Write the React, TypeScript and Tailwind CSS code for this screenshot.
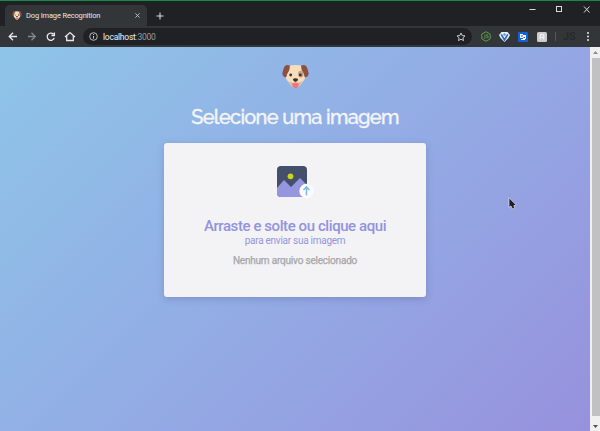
import React from 'react';

function DogIcon({ className }: { className: string }) {
  return (
    <svg className={className} viewBox="0 0 28 26">
      <path d="M6 2.5Q14-.5 22 2.5L24 10Q25 15 22 18L17 24Q14 26.500 11 24L6 18Q3 15 4 10Z" fill="#f6deba" />
      <path d="M8 1.500Q3-.5 1.500 5L.3 10Q1 14.500 4.500 13.500Q5 10 7 7.500Q8.500 4 8 1.500Z" fill="#8d5141" />
      <path d="M20 1.500Q25-.5 26.500 5L27.700 10Q27 14.500 23.500 13.500Q23 10 21 7.500Q19.500 4 20 1.500Z" fill="#8d5141" />
      <ellipse cx="19.500" cy="10.500" rx="2.900" ry="3.500" fill="#c9a087" />
      <circle cx="9" cy="11.500" r="1.500" fill="#38333a" />
      <circle cx="19" cy="11.500" r="1.500" fill="#38333a" />
      <path d="M11.300 15.500Q14 14 16.700 15.500Q16.500 18 14 18.800Q11.500 18 11.300 15.500Z" fill="#343139" />
      <path d="M7 18Q11 20.500 14 18.500Q17 20.500 21 18L17.500 22.500H10.500Z" fill="#e6aa90" />
      <path d="M10.500 20.500Q14 18.800 17.500 20.500L17 24Q14 26.500 11 24Z" fill="#ed777c" />
    </svg>
  );
}

function TabBar() {
  return (
    <div className="flex h-[26px] items-end border-t border-[#188a4b] bg-[#202125] pl-[5px]">
      <div className="flex h-[21px] w-[142px] items-center rounded-t-[5px] bg-[#323639] pl-[7px]">
        <DogIcon className="h-[9px] w-[10px]" />
        <span className="ml-[4px] w-[109px] text-[7.5px] leading-[10px] tracking-[-0.16px] whitespace-nowrap text-[#e5e7e9]">Dog Image Recognition</span>
        <svg className="h-[5px] w-[5px]" viewBox="0 0 5 5"><path d="M.4.4 4.6 4.6M4.6.4.4 4.6" stroke="#d0d2d4" strokeWidth=".85" /></svg>
      </div>
      <svg className="mb-[6px] ml-[9px] h-[8px] w-[8px]" viewBox="0 0 8 8"><path d="M4 .5v7M.5 4h7" stroke="#d9dbdd" strokeWidth="1.1" /></svg>
      <svg className="mr-[7px] mb-[12px] ml-auto h-[9px] w-[64px]" viewBox="0 0 64 9" fill="none" stroke="#d9dadd">
        <path d="M.5 4.5H6.5M55 1.5l5.5 6M60.5 1.5 55 7.5" strokeWidth="1" />
        <rect x="27.5" y="1.5" width="5" height="5" />
      </svg>
    </div>
  );
}

function Toolbar() {
  return (
    <div className="flex h-[21px] items-center bg-[#323639]">
      <svg className="h-[21px] w-[83px] shrink-0" viewBox="0 0 83 21" fill="none" stroke="#e7e8e9" strokeWidth="1.3">
        <path d="M17 10.5H9.5M13 6.7 9.2 10.5 13 14.3" />
        <path stroke="#84888b" d="M28 10.5h7M31.5 6.7l3.8 3.8-3.8 3.8" />
        <path d="M53.5 8.3A3.6 3.6 0 1 0 54.2 12M54.4 6.5v3h-3" />
        <path d="m65 11 5-4.5 5 4.5M66.7 10v4.5h6.6V10" />
      </svg>
      <div className="flex h-[17px] w-[389px] items-center rounded-full bg-[#202125] pl-[6px]">
        <svg className="h-[9px] w-[9px]" viewBox="0 0 9 9" fill="none" stroke="#c5c8ca"><circle cx="4.5" cy="4.5" r="3.8" strokeWidth=".9" /><path d="M4.5 4v2.7M4.5 2.1v1" /></svg>
        <span className="ml-[5px] text-[8.5px] leading-[12px] tracking-[-0.24px] text-[#edeff0]">localhost<span className="text-[#999d9f]">:3000</span></span>
        <svg className="mr-[6px] ml-auto h-[10px] w-[10px]" viewBox="0 0 10 10"><path d="m5 1 1.2 2.6 2.8.3L6.9 5.8 7.5 8.6 5 7.2 2.5 8.6l.6-2.8L1 3.9l2.8-.3Z" fill="none" stroke="#d7d9db" strokeWidth=".9" /></svg>
      </div>
      <div className="flex h-full w-[128px] items-center pl-[9px]">
        <svg className="h-[11px] w-[10px]" viewBox="0 0 10 11" fill="none" stroke="#5f9e45"><path d="m5 .7 4.2 2.4v4.8L5 10.3.8 7.9V3.1Z" /><path d="M4 3.5v4l-1.2-.8M7.2 4q-2-1-2 .3t1.8.8q1.3 1.8-1.6 1.8" strokeWidth=".8" /></svg>
        <svg className="ml-[8px] h-[10px] w-[11px]" viewBox="0 0 11 10"><path d="M2.5 0h6L11 3 9.500 6 5.5 10 1.500 6 0 3Z" fill="#e9f0fa" /><path d="M2.2 2.3 5.5 8 8.8 2.3" fill="none" stroke="#2866b8" strokeWidth="1.6" /><circle cx="5.5" cy="2.500" r="1.2" fill="#5f91d0" /></svg>
        <svg className="ml-[8px] h-[10px] w-[10px]" viewBox="0 0 10 10"><rect width="10" height="10" rx="1" fill="#1461d7" /><path d="M2 2h3v1h3v4H7v1H3V7h2V6H2Z" fill="#eff6ff" /><path d="M3 4h2M5.5 5.500h1.500" stroke="#1461d7" /></svg>
        <svg className="ml-[9px] h-[10px] w-[10px]" viewBox="0 0 10 10"><rect width="10" height="10" rx="1.5" fill="#cbcccd" /><path d="M3.2 7.500v-5h3.600v5M3.2 5l3.6.5" fill="none" stroke="#f8f8f8" /></svg>
        <span className="ml-[8px] h-[9px] w-px bg-[#54585b]" />
        <span className="ml-[7px] text-[11px] leading-[14px] font-medium text-[#24282c]">JS</span>
        <svg className="mr-[11px] ml-auto h-[9px] w-[2px]" viewBox="0 0 2 9" fill="#e5e7e8"><circle cx="1" cy="1" r="1" /><circle cx="1" cy="4.5" r="1" /><circle cx="1" cy="8" r="1" /></svg>
      </div>
    </div>
  );
}

function UploadIcon() {
  return (
    <svg className="mt-[22px] h-[36px] w-[40px]" viewBox="0 0 40 36">
      <defs><clipPath id="photo"><rect x="2" y="1" width="30" height="31" rx="4" /></clipPath></defs>
      <g clipPath="url(#photo)">
        <path d="M2 1h30v31H2Z" fill="#444f6b" />
        <path d="m2 23 7-8 7 7 9-9 8 8v12H2Z" fill="#9696de" />
      </g>
      <circle cx="15.5" cy="11.3" r="2.9" fill="#cbd31d" />
      <circle cx="31.5" cy="26" r="7.2" fill="#fdfdff" />
      <path d="M31.5 30.500v-8.500M28.500 25l3-3 3 3" fill="none" stroke="#80b9e2" strokeWidth="1.6" />
    </svg>
  );
}

function ScrollBar() {
  return (
    <div className="flex w-[10px] flex-col items-center bg-[#f0f0f1]">
      <svg className="h-[11px] w-[10px]" viewBox="0 0 10 11"><path d="m3 7 2.5-3L8 7Z" fill="#8d8d90" /></svg>
      <div className="ml-[1px] h-[358px] w-[8px] bg-[#c1c1c3]" />
      <svg className="h-[15px] w-[10px]" viewBox="0 0 10 15"><path d="m3 9 2.5 3L8 9Z" fill="#505052" /></svg>
    </div>
  );
}

export default function App() {
  return (
    <div className="flex h-[431px] w-[600px] flex-col overflow-hidden font-['Roboto','Liberation_Sans',sans-serif]">
      <TabBar />
      <Toolbar />
      <div className="flex h-[384px]">
        <main className="relative flex w-[590px] flex-col items-center bg-[linear-gradient(135deg,#8ec5e8_0%,#93ace5_50%,#9791dd_100%)]">
          <DogIcon className="mt-[17px] h-[25px] w-[27px]" />
          <h1 className="mt-[12px] h-[32px] font-['Raleway','Lato',sans-serif] text-[20px] leading-[32px] font-medium tracking-[-0.7px] whitespace-nowrap text-[#f5f4f7] [-webkit-text-stroke:0.35px_#f5f4f7]">Selecione uma imagem</h1>
          <section className="mt-[10px] flex h-[154px] w-[262px] flex-col items-center rounded-[3px] bg-[#f3f2f5] shadow-[0_2px_7px_rgba(69,76,130,0.28)]">
            <UploadIcon />
            <h2 className="mt-[16px] text-[15px] leading-[18px] font-medium tracking-[-0.42px] whitespace-nowrap text-[#9293de]">Arraste e solte ou clique aqui</h2>
            <p className="text-[10px] leading-[11px] tracking-[-0.27px] whitespace-nowrap text-[#9395de]">para enviar sua imagem</p>
            <p className="mt-[9px] text-[10px] leading-[12px] tracking-[-0.2px] whitespace-nowrap text-[#a7a6a8] [-webkit-text-stroke:0.25px_#a7a6a8]">Nenhum arquivo selecionado</p>
          </section>
          <svg className="absolute top-[150px] left-[508px] h-[13px] w-[9px]" viewBox="0 0 9 13"><path d="M1 .7v10l2-1.8 1.300 3 2.500-1L5.800 8.800 8 7.800Z" fill="#202124" stroke="#e3e4ef" strokeWidth=".7" /></svg>
        </main>
        <ScrollBar />
      </div>
    </div>
  );
}
